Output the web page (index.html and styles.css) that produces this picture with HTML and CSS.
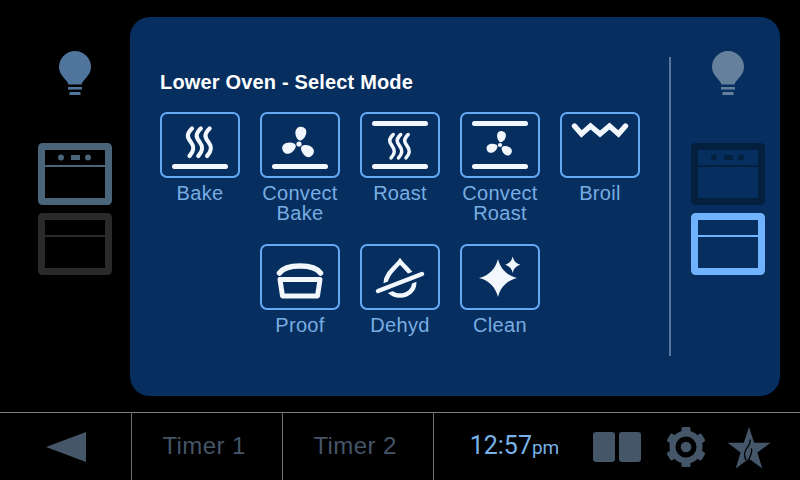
FILE: index.html
```html
<!DOCTYPE html>
<html lang="en">
<head>
    <meta charset="UTF-8">
    <title>Lower Oven - Select Mode</title>
    <link rel="stylesheet" href="styles.css">
</head>
<body>
    <svg class="sprites" width="0" height="0">
        <defs>
            <g id="waves" fill="none" stroke="currentColor" stroke-width="4.2" stroke-linecap="round">
                <path id="wave" d="M32 16.5C26.500 22 27 25 30.5 29.5S35 38 29.5 44"/>
                <use href="#wave" x="8.8"/>
                <use href="#wave" x="17.6"/>
            </g>
            <g id="fan" fill="currentColor">
                <circle r="2.6"/>
                <path id="blade" transform="rotate(10)" d="M-1.500-4C-7-8-7.500-17-.5-17.500 6.500-18 7-9 1.700-4 .6-3.400-.6-3.400-1.500-4Z"/>
                <use href="#blade" transform="rotate(120)"/>
                <use href="#blade" transform="rotate(240)"/>
            </g>
            <g id="bulb" fill="currentColor">
                <path d="M10.500 33.600C10 29 1 25 1 16A16 16 0 1 1 33 16C33 25 24 29 23.500 33.600Z"/>
                <rect x="10" y="36" width="14" height="2.6"/>
                <rect x="11.5" y="41" width="11" height="3"/>
            </g>
        </defs>
    </svg>

    <div class="screen">
        <div class="main">
            <div class="rail">
                <svg class="bulb bulb-left" viewBox="0 0 34 46"><use href="#bulb"/></svg>
                <svg class="oven oven-upper-dim" viewBox="0 0 74 62">
                    <rect x="3.5" y="3.5" width="67" height="55" rx="1" fill="none" stroke="currentColor" stroke-width="7"/>
                    <rect x="7" y="22" width="60" height="2" fill="currentColor"/>
                    <circle cx="23" cy="14.5" r="3" fill="currentColor"/>
                    <circle cx="50" cy="14.5" r="3" fill="currentColor"/>
                    <rect x="33" y="12" width="9" height="5" fill="currentColor"/>
                </svg>
                <svg class="oven oven-lower-dim" viewBox="0 0 74 62">
                    <rect x="3.5" y="3.5" width="67" height="55" rx="1" fill="none" stroke="currentColor" stroke-width="7"/>
                    <rect x="7" y="22" width="60" height="2" fill="currentColor"/>
                </svg>
            </div>

            <div class="panel">
                <div class="modes">
                    <div class="title">Lower Oven - Select Mode</div>
                    <div class="grid">
                        <div class="mode">
                            <div class="mode-btn">
                                <svg viewBox="0 0 76 62">
                                    <g transform="translate(-2 -2)">
                                        <use href="#waves"/>
                                        <rect x="12" y="52" width="56" height="5" rx="2.5" fill="currentColor"/>
                                    </g>
                                </svg>
                            </div>
                            <div class="mode-label">Bake</div>
                        </div>
                        <div class="mode">
                            <div class="mode-btn">
                                <svg viewBox="0 0 76 62">
                                    <g transform="translate(-2 -2)">
                                        <use href="#fan" transform="translate(39 32)"/>
                                        <rect x="12" y="52" width="56" height="5" rx="2.5" fill="currentColor"/>
                                    </g>
                                </svg>
                            </div>
                            <div class="mode-label">Convect Bake</div>
                        </div>
                        <div class="mode">
                            <div class="mode-btn">
                                <svg viewBox="0 0 76 62">
                                    <g transform="translate(-2 -2)">
                                        <rect x="12" y="9" width="56" height="5" rx="2.5" fill="currentColor"/>
                                        <use href="#waves" transform="translate(6 8.5) scale(.85)"/>
                                        <rect x="12" y="52" width="56" height="5" rx="2.5" fill="currentColor"/>
                                    </g>
                                </svg>
                            </div>
                            <div class="mode-label">Roast</div>
                        </div>
                        <div class="mode">
                            <div class="mode-btn">
                                <svg viewBox="0 0 76 62">
                                    <g transform="translate(-2 -2)">
                                        <rect x="12" y="9" width="56" height="5" rx="2.5" fill="currentColor"/>
                                        <use href="#fan" transform="translate(40 33) scale(.8)"/>
                                        <rect x="12" y="52" width="56" height="5" rx="2.5" fill="currentColor"/>
                                    </g>
                                </svg>
                            </div>
                            <div class="mode-label">Convect Roast</div>
                        </div>
                        <div class="mode">
                            <div class="mode-btn">
                                <svg viewBox="0 0 76 62">
                                    <g transform="translate(-2 -2)">
                                        <path d="M14.500 14L21.500 22 30.500 14 40 22 49.500 14 58.500 22 65.500 14" fill="none" stroke="currentColor" stroke-width="5.400" stroke-linecap="round"/>
                                    </g>
                                </svg>
                            </div>
                            <div class="mode-label">Broil</div>
                        </div>
                        <div class="mode mode-row2">
                            <div class="mode-btn">
                                <svg viewBox="0 0 76 62">
                                    <g transform="translate(-2 -2)" fill="none" stroke="currentColor">
                                        <path d="M19.5 29C26 19.500 54 19.500 60.500 29" stroke-width="5.500" stroke-linecap="round"/>
                                        <path d="M20 35.500H60L57.500 52H22.500Z" stroke-width="5" stroke-linejoin="round"/>
                                    </g>
                                </svg>
                            </div>
                            <div class="mode-label">Proof</div>
                        </div>
                        <div class="mode">
                            <div class="mode-btn">
                                <svg viewBox="0 0 76 62">
                                    <g transform="translate(-2 -2)" fill="none" stroke-linecap="round">
                                        <path d="M40 17.500C35 24 25.800 30 25.800 38.500 25.800 46 32 51.500 40 51.500S54.200 46 54.200 38.500C54.200 30 45 24 40 17.500Z" stroke="currentColor" stroke-width="4.500" stroke-miterlimit="8"/>
                                        <path d="M16 48L64 29" class="slash-gap" stroke-width="10.500"/>
                                        <path d="M18 47L62 30" stroke="currentColor" stroke-width="4.500"/>
                                    </g>
                                </svg>
                            </div>
                            <div class="mode-label">Dehyd</div>
                        </div>
                        <div class="mode">
                            <div class="mode-btn">
                                <svg viewBox="0 0 76 62">
                                    <g transform="translate(-2 -2)" fill="currentColor">
                                        <path d="M38 15C40.500 25 47 31.500 57 34 47 36.500 40.500 43 38 53 35.500 43 29 36.500 19 34 29 31.500 35.500 25 38 15Z"/>
                                        <path d="M52.700 12.500C53.700 17 56 19.500 60.500 20.700 56 22 53.700 24.500 52.700 29 51.700 24.500 49.500 22 45 20.700 49.500 19.500 51.700 17 52.700 12.500Z"/>
                                    </g>
                                </svg>
                            </div>
                            <div class="mode-label">Clean</div>
                        </div>
                    </div>
                </div>
                <div class="divider"></div>
                <div class="rail rail-right">
                    <svg class="bulb bulb-right" viewBox="0 0 34 46"><use href="#bulb"/></svg>
                    <svg class="oven oven-upper-off" viewBox="0 0 74 62">
                        <rect x="3.5" y="3.5" width="67" height="55" rx="1" fill="none" stroke="currentColor" stroke-width="7"/>
                        <rect x="7" y="22" width="60" height="2" fill="currentColor"/>
                        <circle cx="23" cy="14.5" r="3" fill="currentColor"/>
                        <circle cx="50" cy="14.5" r="3" fill="currentColor"/>
                        <rect x="33" y="12" width="9" height="5" rx="1" fill="currentColor"/>
                    </svg>
                    <svg class="oven oven-lower-on" viewBox="0 0 74 62">
                        <rect x="3.5" y="3.5" width="67" height="55" rx="1" fill="none" stroke="currentColor" stroke-width="7"/>
                        <rect x="7" y="22" width="60" height="2" fill="currentColor"/>
                    </svg>
                </div>
            </div>
        </div>

        <div class="bottom-bar">
            <div class="cell cell-back">
                <svg class="back-icon" viewBox="0 0 40 30"><path d="M0 15L40 0V30Z"/></svg>
            </div>
            <div class="cell cell-timer">Timer 1</div>
            <div class="cell cell-timer">Timer 2</div>
            <div class="clock">12:57<span class="ampm">pm</span></div>
            <div class="tools">
                <div class="split-icon"><span></span><span></span></div>
                <svg class="gear" viewBox="0 0 40 40">
                    <g fill="currentColor">
                        <rect id="tooth" x="15.5" y="0" width="9" height="8" rx="1.500"/>
                        <use href="#tooth" transform="rotate(60 20 20)"/>
                        <use href="#tooth" transform="rotate(120 20 20)"/>
                        <use href="#tooth" transform="rotate(180 20 20)"/>
                        <use href="#tooth" transform="rotate(240 20 20)"/>
                        <use href="#tooth" transform="rotate(300 20 20)"/>
                        <circle cx="20" cy="20" r="5.300"/>
                    </g>
                    <circle cx="20" cy="20" r="13.500" fill="none" stroke="currentColor" stroke-width="6"/>
                </svg>
                <svg class="star" viewBox="0 0 44 42">
                    <path d="M22 0L27.200 15.800H43.500L30.400 25.600 35.300 41.500 22 31.800 8.700 41.500 13.600 25.600 .5 15.800H16.800Z" fill="currentColor"/>
                    <path d="M23 13C24.500 18 18 21 17.500 26.500 17.300 29 18 31 19 33" class="flame"/>
                    <path d="M24.500 22C25.500 25.500 23.500 28.500 22 31.500" class="flame"/>
                </svg>
            </div>
        </div>
    </div>
</body>
</html>
```

FILE: styles.css
```css
* {
    margin: 0;
    padding: 0;
    box-sizing: border-box;
}

body {
    width: 800px;
    height: 480px;
    overflow: hidden;
    background-color: #000;
    font-family: "Liberation Sans", Arial, sans-serif;
}

.sprites {
    display: block;
    height: 0;
}

.screen {
    display: flex;
    flex-direction: column;
    height: 480px;
}

.main {
    display: flex;
    height: 412px;
    padding-top: 17px;
    padding-left: 38px;
}

.rail {
    display: flex;
    flex-direction: column;
    align-items: center;
    gap: 8px;
    width: 74px;
    padding-top: 34px;
}

.bulb {
    display: block;
    width: 34px;
    height: 46px;
    margin-bottom: 38px;
}

.bulb-left {
    color: #4f759d;
}

.bulb-right {
    color: #64809c;
}

.oven {
    display: block;
    width: 74px;
    height: 62px;
}

.oven-upper-dim {
    color: #4a6479;
}

.oven-lower-dim {
    color: #2a2a2a;
}

.oven-upper-off {
    color: #04203f;
}

.oven-lower-on {
    color: #6fb3ff;
}

.panel {
    display: flex;
    width: 650px;
    height: 379px;
    margin-left: 18px;
    background-color: #062e5e;
    border-radius: 20px;
}

.modes {
    width: 539px;
    padding: 54px 0 0 30px;
}

.title {
    height: 41px;
    font-size: 20px;
    font-weight: bold;
    line-height: 22px;
    letter-spacing: .17px;
    color: #fff;
}

.grid {
    display: grid;
    grid-template-columns: repeat(5, 80px);
    grid-auto-rows: 132px;
    column-gap: 20px;
}

.mode-row2 {
    grid-column-start: 2;
}

.mode-btn {
    width: 80px;
    height: 66px;
    border: 2px solid #63a9f6;
    border-radius: 7px;
    color: #f2f7fd;
}

.mode-btn svg {
    display: block;
    width: 76px;
    height: 62px;
}

.slash-gap {
    stroke: #062e5e;
}

.mode-label {
    margin-top: 5px;
    font-size: 20px;
    line-height: 20px;
    letter-spacing: .3px;
    text-align: center;
    color: #78ade2;
}

.divider {
    width: 2px;
    height: 299px;
    margin-top: 40px;
    margin-right: 20px;
    background-color: #56779b;
}

.bottom-bar {
    display: flex;
    align-items: stretch;
    height: 68px;
    border-top: 1px solid #7c7c7c;
}

.cell {
    display: flex;
    align-items: center;
    justify-content: center;
    border-right: 1px solid #6e6e6e;
}

.cell-back {
    width: 132px;
}

.back-icon {
    display: block;
    width: 40px;
    height: 30px;
    fill: #445668;
}

.cell-timer {
    width: 151px;
    padding-right: 6px;
    padding-bottom: 2px;
    font-size: 24px;
    letter-spacing: .4px;
    color: #445568;
}

.clock {
    display: flex;
    align-items: baseline;
    justify-content: center;
    width: 137px;
    padding-top: 18px;
    padding-left: 24px;
    font-family: Roboto, sans-serif;
    font-size: 25px;
    color: #78b2e8;
}

.ampm {
    font-size: 19px;
}

.tools {
    display: flex;
    align-items: center;
    padding-left: 22px;
    color: #445668;
}

.split-icon {
    display: flex;
    gap: 4px;
}

.split-icon span {
    display: block;
    width: 22px;
    height: 30px;
    border-radius: 3px;
    background-color: #445668;
}

.gear {
    display: block;
    width: 40px;
    height: 40px;
    margin-left: 25px;
}

.star {
    display: block;
    width: 44px;
    height: 42px;
    margin-left: 21px;
    margin-top: 2px;
}

.flame {
    fill: none;
    stroke: #000;
    stroke-width: 1.3;
    stroke-linecap: round;
}
```
